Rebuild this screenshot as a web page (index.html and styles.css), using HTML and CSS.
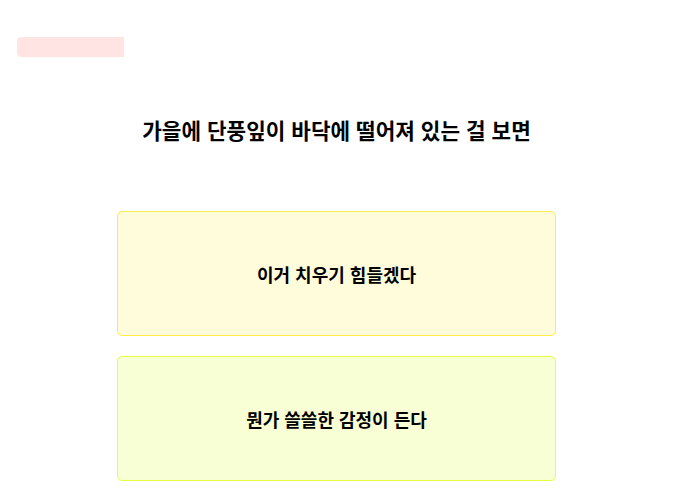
FILE: index.html
```html
<!DOCTYPE html>
<html lang="ko">
<head>
    <meta charset="UTF-8">
    <meta name="viewport" content="width=device-width, initial-scale=1.0">
    <title>심리 테스트</title>
    <link rel="stylesheet" href="styles.css">
</head>
<body>
    <div class="quiz">
        <div class="progress">
            <div class="progress-bar"></div>
        </div>
        <h1 class="question">가을에 단풍잎이 바닥에 떨어져 있는 걸 보면</h1>
        <div class="answers">
            <button class="answer answer-a">이거 치우기 힘들겠다</button>
            <button class="answer answer-b">뭔가 쓸쓸한 감정이 든다</button>
        </div>
    </div>
</body>
</html>
```

FILE: styles.css
```css
body {
    margin: 0;
    padding: 0;
    background: #ffffff;
    font-family: "Noto Sans CJK KR", "Noto Sans", sans-serif;
    color: #000;
}

.quiz {
    display: flex;
    flex-direction: column;
    padding: 37px 17px 0;
}

.progress {
    height: 20px;
}

.progress-bar {
    width: 107px;
    height: 100%;
    background: #ffe4e3;
    border-radius: 4px 0 0 4px;
}

.question {
    margin: 58px 0 0;
    font-size: 21.3px;
    line-height: 30px;
    font-weight: bold;
    text-align: center;
}

.answers {
    display: flex;
    flex-direction: column;
    align-items: center;
    gap: 20px;
    margin-top: 66px;
}

.answer {
    width: 439px;
    height: 125px;
    box-sizing: border-box;
    border-radius: 5px;
    font-family: inherit;
    font-size: 18px;
    font-weight: bold;
    color: #000;
    display: flex;
    align-items: center;
    justify-content: center;
    padding: 0;
    cursor: pointer;
}

.answer-a {
    background: #fffcdc;
    border: 1px solid #ffec4a;
}

.answer-b {
    background: #f8ffd5;
    border: 1px solid #e6ff3c;
}
```
